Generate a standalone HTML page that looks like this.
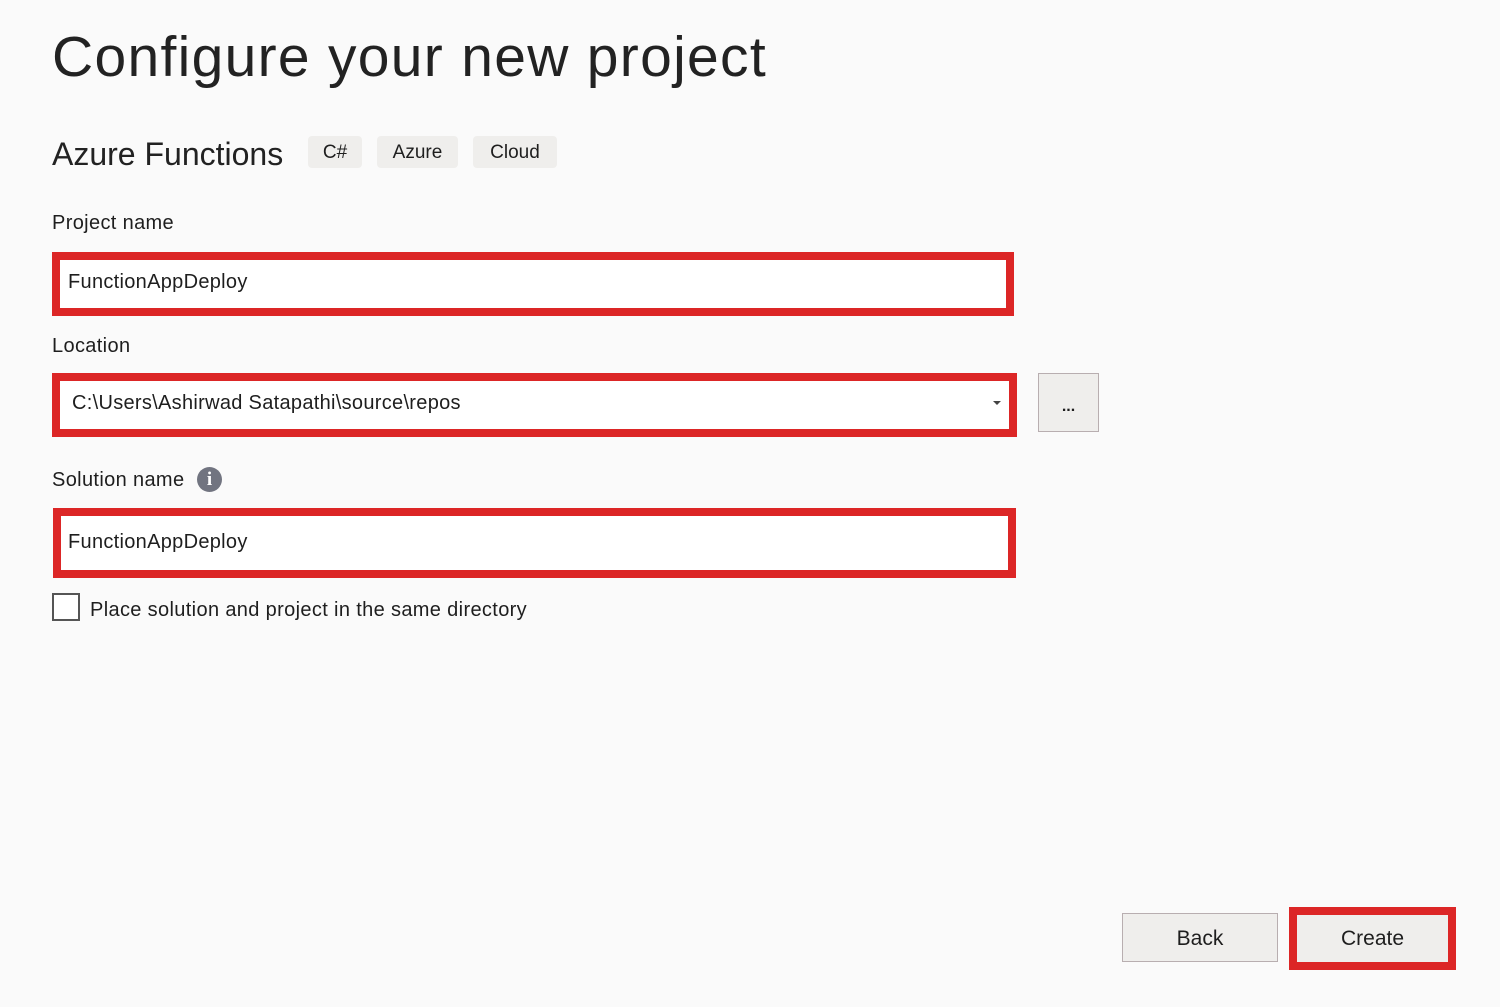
<!DOCTYPE html>
<html><head><meta charset="utf-8"><style>
body{margin:0;width:1500px;height:1007px;background:#fafafa;font-family:"Liberation Sans",sans-serif;color:#1e1e1e;position:relative;overflow:hidden}
.a{position:absolute;white-space:nowrap}
.red{position:absolute;border:8px solid #dc2626;box-sizing:border-box;background:#fff}
.tag{position:absolute;top:136px;height:32px;background:#efeeec;border-radius:4px;font-size:19px;line-height:34px;text-align:center}
.lbl{font-size:20px;letter-spacing:0.35px}
.inp{font-size:20px;letter-spacing:0.3px}
.btn{position:absolute;background:#efeeec;border:1px solid #b8aeb0;box-sizing:border-box;font-size:21px;text-align:center}
</style></head><body>
<div class="a" style="left:52px;top:24px;font-size:57px;color:#222;letter-spacing:1.3px">Configure your new project</div>
<div class="a" style="left:52px;top:136px;font-size:32px;color:#222">Azure Functions</div>
<div class="tag" style="left:308px;width:54px">C#</div>
<div class="tag" style="left:377px;width:81px">Azure</div>
<div class="tag" style="left:473px;width:84px">Cloud</div>
<div class="a lbl" style="left:52px;top:212px">Project name</div>
<div class="red" style="left:52px;top:252px;width:962px;height:64px"></div>
<div class="a inp" style="left:68px;top:271px">FunctionAppDeploy</div>
<div class="a lbl" style="left:52px;top:335px">Location</div>
<div class="red" style="left:52px;top:373px;width:965px;height:64px"></div>
<div class="a inp" style="left:72px;top:392px">C:\Users\Ashirwad Satapathi\source\repos</div>
<div class="a" style="left:993px;top:401px;width:0;height:0;border-left:4px solid transparent;border-right:4px solid transparent;border-top:4px solid #444"></div>
<div class="btn" style="left:1038px;top:373px;width:61px;height:59px;line-height:66px;font-size:16px;font-weight:bold">...</div>
<div class="a lbl" style="left:52px;top:469px">Solution name</div>
<div class="a" style="left:197px;top:467px;width:25px;height:25px;border-radius:50%;background:#717480;color:#fff;font-weight:bold;font-size:19px;line-height:25px;text-align:center;font-family:'Liberation Serif',serif">i</div>
<div class="red" style="left:53px;top:508px;width:963px;height:70px"></div>
<div class="a inp" style="left:68px;top:531px">FunctionAppDeploy</div>
<div class="a" style="left:52px;top:593px;width:28px;height:28px;border:2px solid #555;box-sizing:border-box;background:#fff"></div>
<div class="a lbl" style="left:90px;top:599px">Place solution and project in the same directory</div>
<div class="btn" style="left:1122px;top:913px;width:156px;height:49px;line-height:49px">Back</div>
<div class="red" style="left:1289px;top:907px;width:167px;height:63px;background:#efeeec;line-height:47px;text-align:center;font-size:21px">Create</div>
</body></html>
